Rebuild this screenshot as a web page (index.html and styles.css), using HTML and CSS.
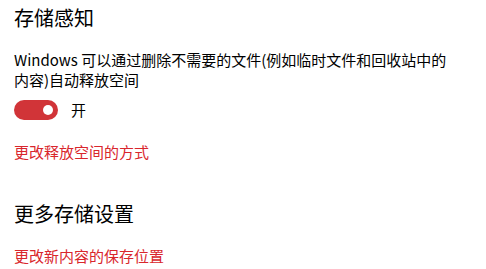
FILE: index.html
```html
<!DOCTYPE html>
<html lang="zh-CN">
<head>
<meta charset="utf-8">
<link rel="stylesheet" href="styles.css">
</head>
<body>
<main class="page">
  <h1 class="title">存储感知</h1>
  <p class="desc">Windows 可以通过删除不需要的文件(例如临时文件和回收站中的内容)自动释放空间</p>
  <div class="toggle-row">
    <span class="toggle"><span class="knob"></span></span>
    <span class="toggle-label">开</span>
  </div>
  <a class="link first-link">更改释放空间的方式</a>
  <h2 class="title second-title">更多存储设置</h2>
  <a class="link">更改新内容的保存位置</a>
</main>
</body>
</html>
```
FILE: styles.css
```css
html, body {
  margin: 0;
  background: #ffffff;
}
.page {
  display: flex;
  flex-direction: column;
  align-items: flex-start;
  padding: 4px 14px 0 14px;
  font-family: "Noto Sans CJK SC", "Noto Sans", sans-serif;
  color: #000000;
}
.title {
  margin: 0;
  font-size: 20px;
  line-height: 28px;
  font-weight: 400;
}
.desc {
  margin: 18px 0 0 0;
  font-size: 15px;
  line-height: 20px;
  width: 440px;
}
.toggle-row {
  display: flex;
  align-items: center;
  gap: 13px;
  margin-top: 10px;
  height: 20px;
}
.toggle {
  width: 44px;
  height: 20px;
  border-radius: 10px;
  background: #d13438;
  display: flex;
  align-items: center;
  justify-content: flex-end;
  padding-right: 5px;
  box-sizing: border-box;
}
.knob {
  width: 10px;
  height: 10px;
  border-radius: 50%;
  background: #ffffff;
}
.toggle-label {
  font-size: 15px;
  line-height: 20px;
}
.link {
  font-size: 15px;
  line-height: 20px;
  color: #d9262c;
  margin-top: 18px;
}
.first-link {
  margin-top: 22px;
}
.second-title {
  margin-top: 38px;
}
```
